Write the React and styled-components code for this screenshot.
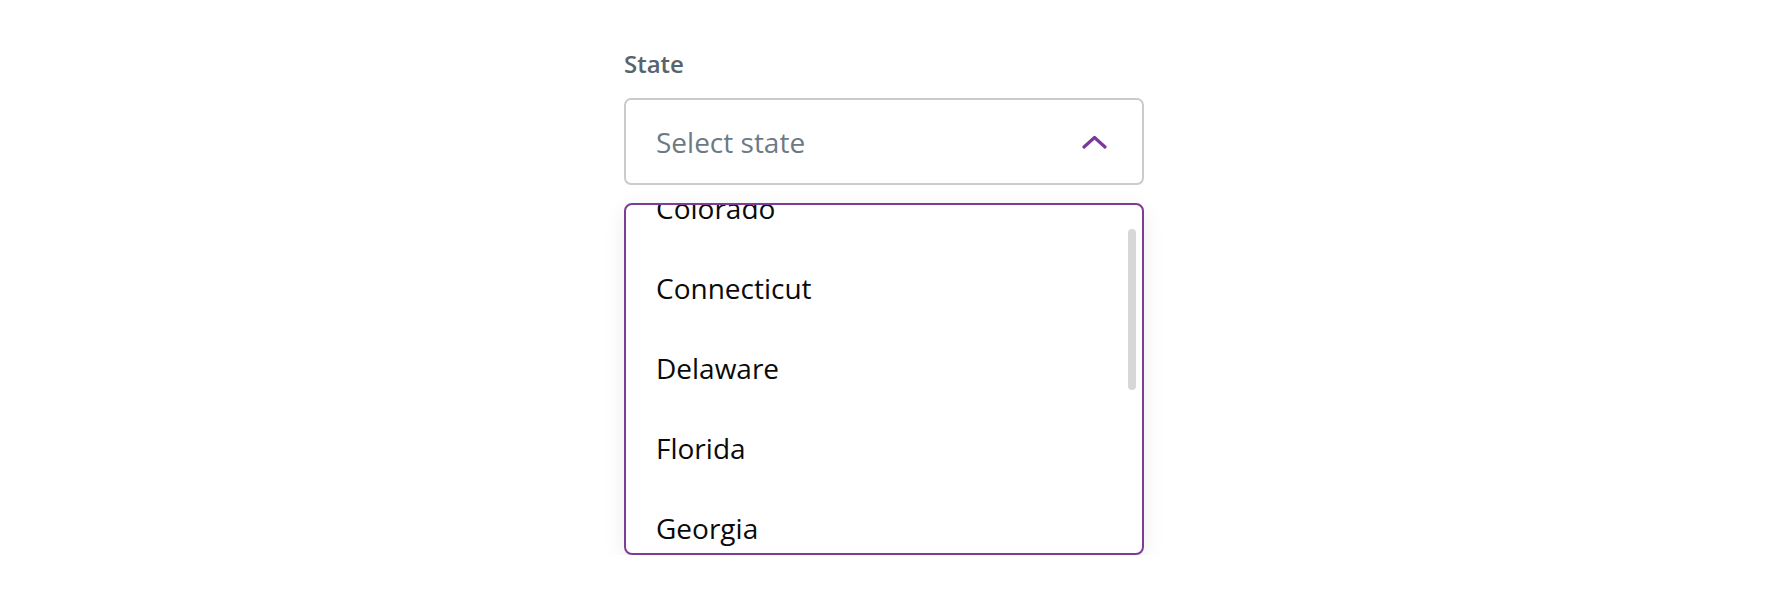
import React, { useLayoutEffect, useRef } from "react";
import styled, { createGlobalStyle } from "styled-components";

const GlobalStyle = createGlobalStyle`
  body {
    margin: 0;
    background: #ffffff;
    font-family: "Open Sans", "Noto Sans", sans-serif;
  }
`;

const Page = styled.div`
  display: flex;
  justify-content: center;
  padding: 49px 2px 0 0;
`;

const Field = styled.div`
  width: 520px;
  display: flex;
  flex-direction: column;
`;

const Label = styled.label`
  font-size: 24px;
  line-height: 30px;
  font-weight: 600;
  color: #56646d;
  margin-bottom: 19px;
`;

const Trigger = styled.div`
  box-sizing: border-box;
  height: 87px;
  border: 2px solid #cbcbcb;
  border-radius: 7px;
  display: flex;
  align-items: center;
  justify-content: space-between;
  padding: 0 35px 0 30px;
`;

const Placeholder = styled.span`
  font-size: 28px;
  color: #6c7a84;
`;

const Menu = styled.div`
  position: relative;
  box-sizing: border-box;
  margin-top: 18px;
  height: 352px;
  border: 2px solid #7d3c98;
  border-radius: 8px;
  background: #fff;
  box-shadow: 0 6px 22px rgba(0, 0, 0, 0.08);
  overflow: hidden;
`;

const List = styled.ul`
  list-style: none;
  margin: 0;
  padding: 0;
  height: 100%;
  overflow-y: auto;
  scrollbar-width: none;
  &::-webkit-scrollbar {
    display: none;
  }
`;

const Item = styled.li`
  height: 80px;
  line-height: 80px;
  padding: 0 30px;
  font-size: 28px;
  color: #0a0a0a;
`;

const Thumb = styled.div`
  position: absolute;
  top: 24px;
  right: 6px;
  width: 8px;
  height: 161px;
  border-radius: 4px;
  background: #d7d7d7;
`;

const states = [
  "Alabama",
  "Alaska",
  "Arizona",
  "Arkansas",
  "California",
  "Colorado",
  "Connecticut",
  "Delaware",
  "Florida",
  "Georgia",
  "Hawaii",
  "Idaho",
  "Illinois",
  "Indiana",
  "Iowa",
];

const Chevron = () => (
  <svg width="25" height="14" viewBox="0 0 25 14" fill="none">
    <path
      d="M2 12L12.5 2.5 23 12"
      stroke="#7b3a9b"
      strokeWidth="3.2"
      strokeLinecap="round"
      strokeLinejoin="round"
    />
  </svg>
);

export default function App() {
  const listRef = useRef(null);

  useLayoutEffect(() => {
    if (listRef.current) listRef.current.scrollTop = 437;
  }, []);

  return (
    <>
      <GlobalStyle />
      <Page>
        <Field>
          <Label>State</Label>
          <Trigger>
            <Placeholder>Select state</Placeholder>
            <Chevron />
          </Trigger>
          <Menu>
            <List ref={listRef}>
              {states.map((s) => (
                <Item key={s}>{s}</Item>
              ))}
            </List>
            <Thumb />
          </Menu>
        </Field>
      </Page>
    </>
  );
}
